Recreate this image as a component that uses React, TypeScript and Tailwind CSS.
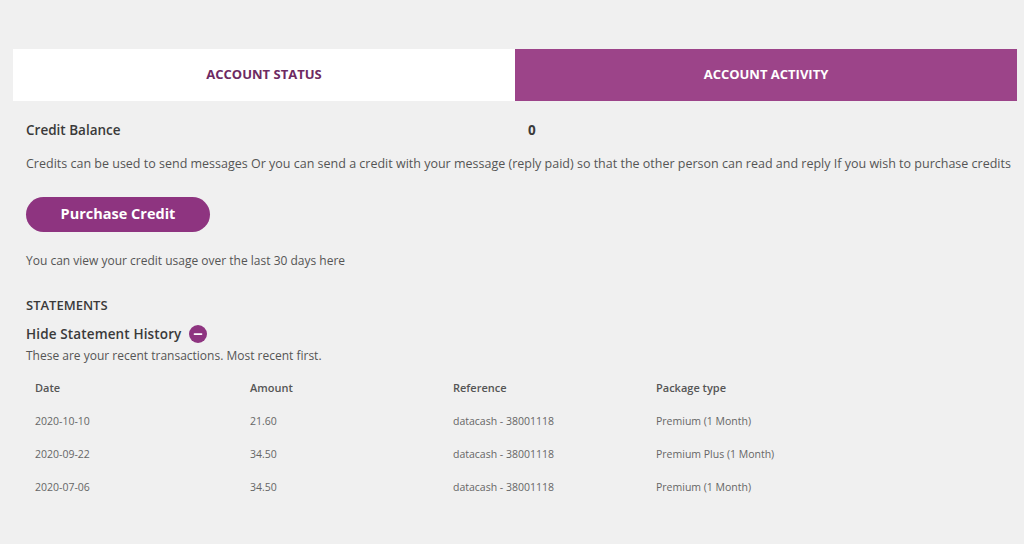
import { Minus } from "lucide-react";

const rows = [
    { date: "2020-10-10", amount: "21.60", ref: "datacash - 38001118", pkg: "Premium (1 Month)" },
    { date: "2020-09-22", amount: "34.50", ref: "datacash - 38001118", pkg: "Premium Plus (1 Month)" },
    { date: "2020-07-06", amount: "34.50", ref: "datacash - 38001118", pkg: "Premium (1 Month)" },
];

export default function App() {
    return (
        <div className="w-[1024px] h-[544px] overflow-hidden bg-[#f0f0f0] font-['Open_Sans',sans-serif] text-[#444]">
            {/* Tabs */}
            <div className="flex ml-[13px] mt-[49px] w-[1004px] h-[52px]">
                <div className="flex-1 bg-white flex items-center justify-center text-[13px] font-bold text-[#6e2a62]">
                    ACCOUNT STATUS
                </div>
                <div className="flex-1 bg-[#9c4489] flex items-center justify-center text-[13px] font-bold text-white">
                    ACCOUNT ACTIVITY
                </div>
            </div>

            <div className="pl-[26px]">
                <div className="flex items-center mt-[20px] h-[18px] text-[13.5px] font-semibold text-[#3a3a3a]">
                    <span className="w-[502px]">Credit Balance</span>
                    <span className="font-bold">0</span>
                </div>

                <p className="mt-[16px] text-[12.5px] whitespace-nowrap text-[#555]">
                    Credits can be used to send messages Or you can send a credit with your message (reply paid) so that the other person can read and reply If you wish to purchase credits
                </p>

                <button className="mt-[23px] w-[184px] h-[35px] rounded-full bg-[#8e3480] text-white text-[14.5px] font-bold">
                    Purchase Credit
                </button>

                <p className="mt-[20px] text-[12px] text-[#555]">You can view your credit usage over the last 30 days here</p>

                <h3 className="mt-[26px] text-[13px] font-semibold text-[#3a3a3a]">STATEMENTS</h3>

                <div className="mt-[9px] flex items-center gap-[8px] text-[13.5px] font-semibold text-[#3a3a3a] tracking-[0.01em]">
                    <span>Hide Statement History</span>
                    <span className="w-[18px] h-[18px] rounded-full bg-[#8e3480] flex items-center justify-center">
                        <Minus className="w-[12px] h-[12px] text-white" strokeWidth={3.5} />
                    </span>
                </div>
                <p className="mt-[2px] text-[12px] text-[#555]">These are your recent transactions. Most recent first.</p>

                {/* Table */}
                <div className="mt-[15px] pl-[9px]">
                    <div className="grid grid-cols-[215px_203px_203px_1fr] h-[18px] items-center text-[#555] text-[11px] font-semibold">
                        <span>Date</span>
                        <span>Amount</span>
                        <span>Reference</span>
                        <span>Package type</span>
                    </div>
                    {rows.map((r, i) => (
                        <div key={i} className="grid grid-cols-[215px_203px_203px_1fr] h-[18px] mt-[15px] items-center text-[#666] text-[10.5px]">
                            <span>{r.date}</span>
                            <span>{r.amount}</span>
                            <span className="w-[125px] overflow-hidden whitespace-nowrap">{r.ref}</span>
                            <span>{r.pkg}</span>
                        </div>
                    ))}
                </div>
            </div>
        </div>
    );
}
